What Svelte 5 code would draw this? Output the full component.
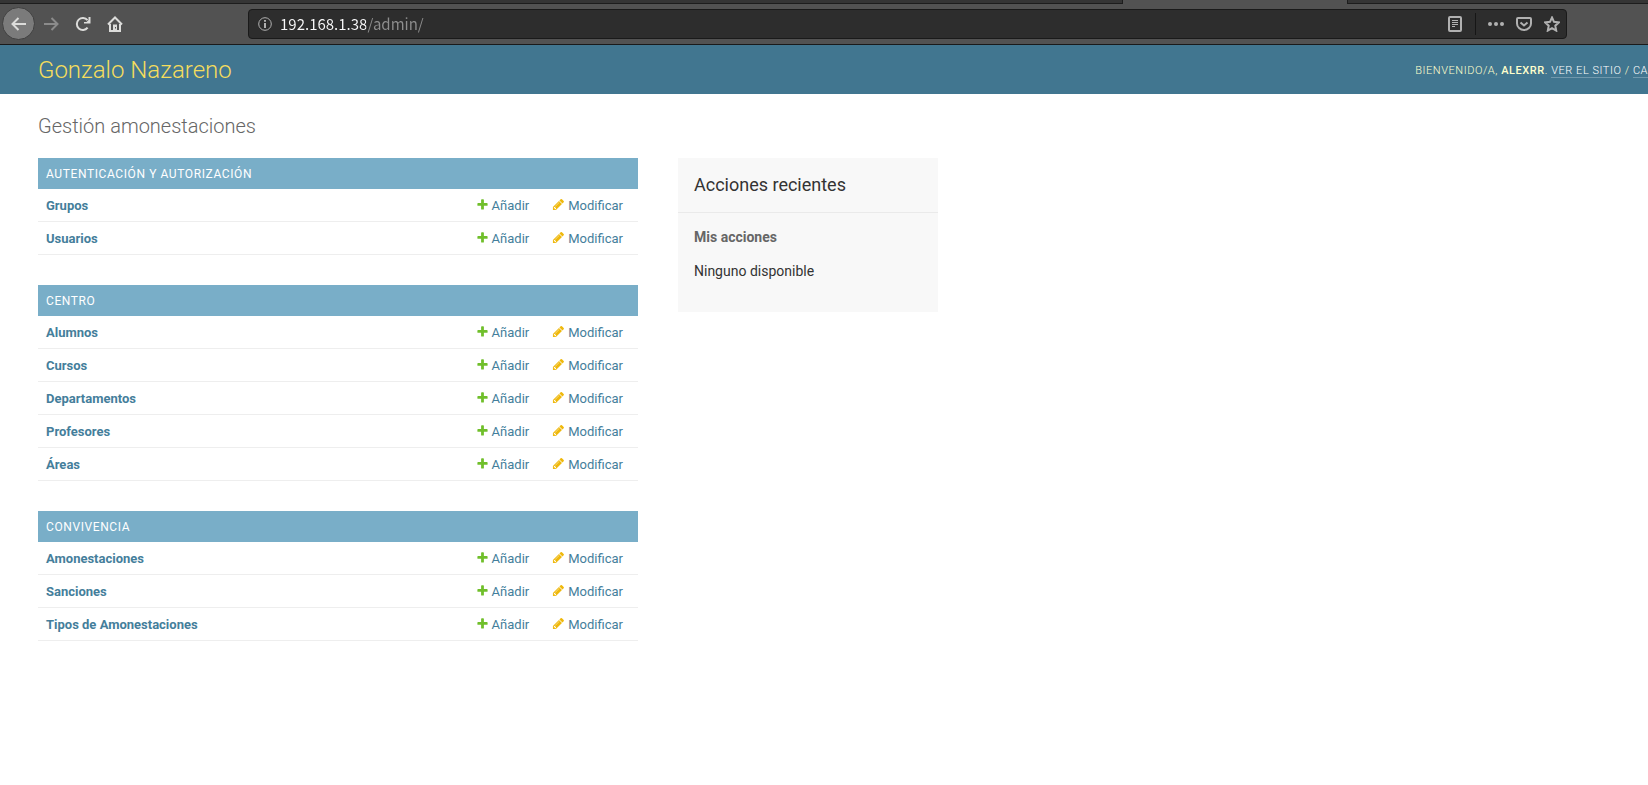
<script>
  const modules = [
    { name: 'Autenticación y autorización', models: ['Grupos', 'Usuarios'] },
    { name: 'Centro', models: ['Alumnos', 'Cursos', 'Departamentos', 'Profesores', 'Áreas'] },
    { name: 'Convivencia', models: ['Amonestaciones', 'Sanciones', 'Tipos de Amonestaciones'] }
  ];
</script>

<div class="tabs"><span></span><span class="active"></span><span></span></div>

<div class="toolbar">
  <div class="nav">
    <button class="back" aria-label="Atrás">
      <svg width="16" height="16" viewBox="0 0 16 16"><path d="M15 8H2M7.500 2 1.500 8l6 6" /></svg>
    </button>
    <button class="off" aria-label="Adelante">
      <svg width="16" height="16" viewBox="0 0 16 16"><path d="M1 8h13M8.500 2l6 6-6 6" /></svg>
    </button>
    <button aria-label="Recargar">
      <svg width="16" height="16" viewBox="0 0 16 16"><path d="M12.600 11.600A6 6 0 1 1 12.500 4.200" /><path class="solid" d="M15.500 1v6.500H9V6h2.500l2-2V1z" /></svg>
    </button>
    <button aria-label="Inicio">
      <svg width="16" height="16" viewBox="0 0 16 16"><path d="M1 8.500 8 1.500l7 7M3 8v7h10V8" /><path class="solid" d="M6 8.500h4V15H6z" /><path class="hole" d="M8 11h1v1.500H8z" /></svg>
    </button>
  </div>
  <div class="urlbar">
    <svg class="info" width="14" height="14" viewBox="0 0 14 14"><circle cx="7" cy="7" r="6.300" /><path d="M7 6v5M7 3v1.700" /></svg>
    <input aria-label="Dirección" value="192.168.1.38/admin/" spellcheck="false" />
    <button aria-label="Vista de lectura">
      <svg width="16" height="16" viewBox="0 0 16 16"><rect x="2" y="1" width="12" height="14" rx="1" /><path class="thin" d="M5 4.500h6M5 6.500h6M5 8.500h6M5 10.500h3" /></svg>
    </button>
    <span class="divider"></span>
    <button aria-label="Acciones de página">
      <svg width="16" height="16" viewBox="0 0 16 16"><g class="solid"><circle cx="2" cy="8" r="2" /><circle cx="8" cy="8" r="2" /><circle cx="14" cy="8" r="2" /></g></svg>
    </button>
    <button aria-label="Pocket">
      <svg width="16" height="16" viewBox="0 0 16 16"><path d="M2 2h12q1 0 1 1v4.500a7 6.500 0 0 1-14 0V3q0-1 1-1z" /><path d="m4.500 6.500 3.500 3 3.500-3" /></svg>
    </button>
    <button aria-label="Añadir a marcadores">
      <svg width="16" height="16" viewBox="0 0 16 16"><path d="m8 1.500 2 4.300 4.800.6-3.500 3.300.9 4.900L8 12.200l-4.200 2.400.9-4.900L1.200 6.400 6 5.800z" /></svg>
    </button>
  </div>
</div>

<header>
  <a class="brand" href="#inicio">Gonzalo Nazareno</a>
  <div class="user">Bienvenido/a, <strong>alexrr</strong>. <a href="#sitio">Ver el sitio</a> / <a href="#cuenta">Ca</a></div>
</header>

<main>
  <h1>Gestión amonestaciones</h1>
  <div class="columns">
    <div class="modules">
      {#each modules as module}
        <table>
          <caption>{module.name}</caption>
          <tbody>
            {#each module.models as model}
              <tr>
                <th scope="row"><a href="#modelo">{model}</a></th>
                <td>
                  <a href="#nuevo"><svg width="13" height="13" viewBox="0 0 1792 1792"><path fill="#70bf2b" d="M1600 796v192q0 40-28 68t-68 28h-416v416q0 40-28 68t-68 28h-192q-40 0-68-28t-28-68v-416h-416q-40 0-68-28t-28-68v-192q0-40 28-68t68-28h416v-416q0-40 28-68t68-28h192q40 0 68 28t28 68v416h416q40 0 68 28t28 68z" /></svg>Añadir</a>
                </td>
                <td>
                  <a href="#lista"><svg width="13" height="13" viewBox="0 0 1792 1792"><path fill="#efb80b" d="M491 1536l91-91-235-235-91 91v107h128v128h107zm523-928q0-22-22-22-10 0-17 7l-542 542q-7 7-7 17 0 22 22 22 10 0 17-7l542-542q7-7 7-17zm-54-192l416 416-832 832h-416v-416zm683 96q0 53-37 90l-166 166-416-416 166-165q36-38 90-38 53 0 91 38l235 234q37 39 37 91z" /></svg>Modificar</a>
                </td>
              </tr>
            {/each}
          </tbody>
        </table>
      {/each}
    </div>
    <aside>
      <h2>Acciones recientes</h2>
      <h3>Mis acciones</h3>
      <p>Ninguno disponible</p>
    </aside>
  </div>
</main>

<style>
  :global(body) {
    background: #fff;
    color: #333;
    font-family: Roboto, "Liberation Sans", sans-serif;
    font-size: 14px;
    overflow-x: hidden;
  }
  a { color: #447e9b; text-decoration: none; }
  button { border: 0; padding: 0; background: none; color: inherit; display: grid; place-items: center; }

  .tabs { display: grid; grid-template-columns: 1122fr 226fr 300fr; height: 4px; background: #353535; }
  .tabs span { border-bottom: 1px solid #1d1d1d; }
  .tabs .active { background: #525252; border: solid #1d1d1d; border-width: 0 1px; }

  .toolbar {
    display: flex;
    align-items: center;
    box-sizing: border-box;
    height: 41px;
    padding: 0 81px 1px 2px;
    border-bottom: 1px solid #1a1a1a;
    background: #525252;
    color: #dcdcda;
  }
  .toolbar svg { fill: none; stroke: currentColor; stroke-width: 2; }
  .toolbar svg .solid { fill: currentColor; stroke: none; }
  .toolbar svg .hole { fill: #525252; stroke: none; }
  .toolbar svg .thin { stroke-width: 1; }
  .nav { display: flex; align-items: center; width: 246px; }
  .nav button { width: 32px; height: 32px; }
  .nav .back { box-sizing: border-box; width: 33px; height: 33px; border: 1px solid #404040; border-radius: 50%; background: #7b7b7b; }
  .nav .off { color: #8b8b8b; }
  .urlbar {
    flex: 1;
    display: flex;
    align-items: center;
    gap: 12px;
    box-sizing: border-box;
    height: 30px;
    padding: 0 6px 0 9px;
    border: 1px solid #1a1a1a;
    border-radius: 4px;
    background: #2d2d2d;
    color: #b1b1b1;
  }
  .urlbar .info { stroke-width: 1; margin-right: -4px; }
  .urlbar .info path { stroke-width: 2; }
  .urlbar .divider { width: 1px; height: 22px; background: #161616; }
  .urlbar input {
    flex: 1;
    min-width: 0;
    padding: 0;
    border: 0;
    outline: 0;
    font: 15px/22px "Noto Sans CJK SC", "Noto Sans", sans-serif;
    color: transparent;
    background: linear-gradient(90deg, #f9f9fa 86px, #8e8e8e 86px) text;
  }

  header {
    display: flex;
    align-items: center;
    justify-content: space-between;
    height: 49px;
    padding-left: 38px;
    background: #417690;
    color: #ffc;
    font-weight: 300;
  }
  .brand { color: #f5dd5d; font-size: 24px; }
  .user { padding-top: 2px; font-size: 11px; letter-spacing: 0.05em; text-transform: uppercase; white-space: nowrap; }
  .user strong { font-weight: 500; }
  .user a { color: #fff; border-bottom: 1px solid rgba(255, 255, 255, 0.25); }

  main { padding: 20px 38px; }
  h1 { margin: 0 0 20px; color: #666; font-size: 20px; line-height: 24px; font-weight: 300; }
  .columns { display: flex; align-items: flex-start; gap: 40px; }
  .modules { flex: 0 1 600px; display: grid; gap: 30px; }
  table { width: 100%; border-collapse: collapse; font-size: 13px; line-height: 16px; }
  caption {
    padding: 9px 8px 7px;
    background: #79aec8;
    color: #fff;
    font-size: 12px;
    line-height: 15px;
    letter-spacing: 0.05em;
    text-align: left;
    text-transform: uppercase;
  }
  tr { border-bottom: 1px solid #eee; }
  th, td { padding: 9px 8px 7px; text-align: left; }
  th { width: 100%; font-weight: 700; }
  td { padding-right: 15px; }
  td a { display: flex; gap: 3px; }

  aside { flex: 0 0 260px; background: #f8f8f8; }
  h2 { margin: 0; padding: 16px; border-bottom: 1px solid #eaeaea; font-size: 18px; line-height: 22px; font-weight: 400; }
  h3 { margin: 16px 16px 0; color: #666; font-size: 14px; line-height: 16px; font-weight: 700; }
  p { margin: 16px 16px 0; padding-bottom: 31px; line-height: 20px; }
</style>
